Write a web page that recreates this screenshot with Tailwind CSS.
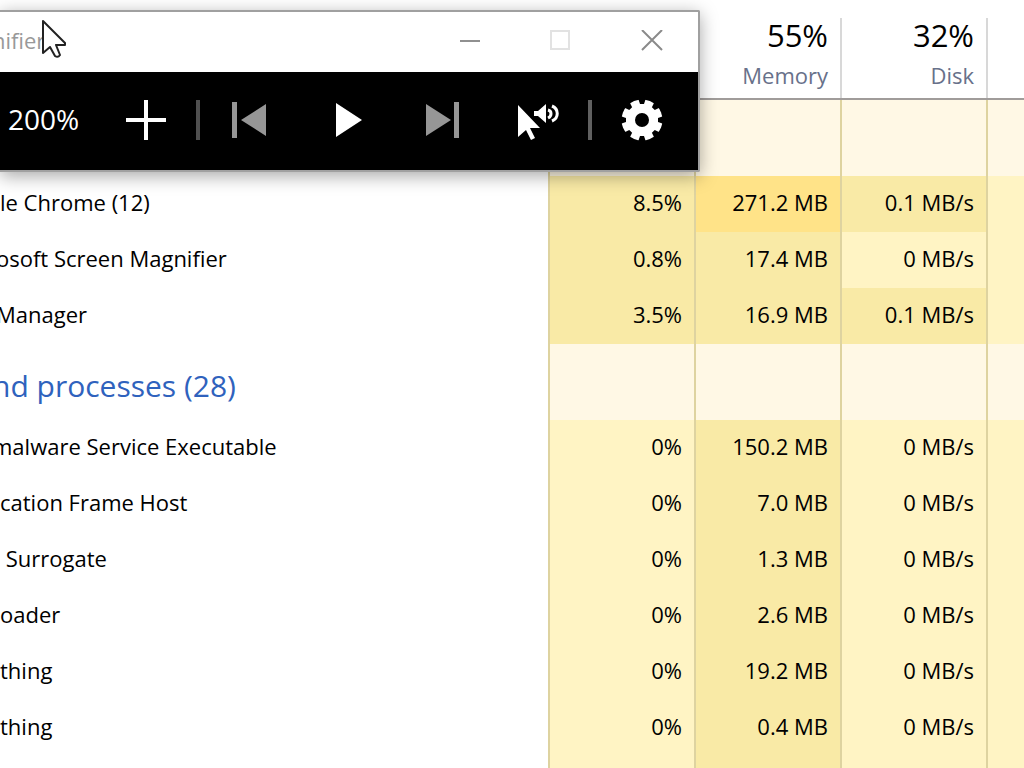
<!DOCTYPE html>
<html lang="en">
<head>
  <meta charset="UTF-8">
  <meta name="viewport" content="width=device-width, initial-scale=1.0">
  <title>Task Manager</title>
  <script src="https://cdn.jsdelivr.net/npm/@tailwindcss/browser@4"></script>
</head>
<body class="relative h-screen overflow-hidden bg-white text-black font-['Open_Sans','Noto_Sans',sans-serif]">

  <!-- Process list -->
  <table class="w-full table-fixed border-separate border-spacing-0 text-[22px] leading-7 whitespace-nowrap">
    <colgroup>
      <col>
      <col class="w-[146px]">
      <col class="w-[146px]">
      <col class="w-[146px]">
      <col class="w-[38px]">
    </colgroup>
    <thead>
      <tr class="h-[100px] text-right">
        <td class="border-b-2 border-[#a09c9a]"></td>
        <td class="border-b-2 border-[#a09c9a]"></td>
        <th scope="col" class="border-b-2 border-[#a09c9a] p-0 pt-3 pr-3 font-normal">
          <div class="text-[31px] leading-10">55%</div>
          <div class="leading-10 text-[#68718a]">Memory</div>
        </th>
        <th scope="col" class="border-b-2 border-[#a09c9a] p-0 pt-3 pr-3 font-normal bg-linear-to-b from-[#d8d8d8] to-[#d8d8d8] bg-[length:2px_80px] bg-no-repeat bg-bottom-left">
          <div class="text-[31px] leading-10">32%</div>
          <div class="leading-10 text-[#68718a]">Disk</div>
        </th>
        <td class="border-b-2 border-[#a09c9a] bg-linear-to-b from-[#d8d8d8] to-[#d8d8d8] bg-[length:2px_80px] bg-no-repeat bg-bottom-left"></td>
      </tr>
    </thead>
    <tbody id="processes"></tbody>
  </table>

  <!-- Magnifier window -->
  <section class="absolute left-0 top-[10px] w-[700px] border-2 border-l-0 border-[#a0a0a0] rounded-r-xs shadow-[0_4px_18px_rgba(0,0,0,0.35)]">
    <header class="flex h-[60px] items-center bg-white text-[#999]">
      <h1 class="-ml-2 flex-1 pb-1 text-[22px]">nifier</h1>
      <button class="flex h-full w-[92px] items-center justify-center" aria-label="Minimize">
        <svg width="24" height="24" viewBox="0 0 24 24" stroke="#909090" stroke-width="2"><path d="M4 11h20"/></svg>
      </button>
      <button class="flex h-full w-[92px] items-center justify-center" aria-label="Maximize" disabled>
        <svg width="24" height="24" viewBox="0 0 24 24" fill="none" stroke="#e2e2e2" stroke-width="2"><rect x="3" y="1" width="18" height="18"/></svg>
      </button>
      <button class="flex h-full w-[92px] items-center justify-center" aria-label="Close">
        <svg width="24" height="24" viewBox="0 0 24 24" stroke="#8a8a8a" stroke-width="2"><path d="M2 0l20 20M22 0L2 20"/></svg>
      </button>
    </header>

    <div class="flex h-[98px] items-center bg-black pb-[2px] text-white">
      <output class="w-[96px] pb-[2px] pl-2 text-[28px]">200%</output>
      <button class="flex h-full w-[100px] items-center justify-center" aria-label="Zoom in">
        <svg width="40" height="40" viewBox="0 0 40 40" stroke="#fff" stroke-width="4"><path d="M20 0v40M0 20h40"/></svg>
      </button>
      <span class="h-10 w-1 bg-[#505050]"></span>
      <button class="flex h-full flex-1 items-center justify-center" aria-label="Previous" disabled>
        <svg width="36" height="36" viewBox="0 0 36 36" fill="#969696"><path d="M1 0h5v36H1zM35 2v32L10 18z"/></svg>
      </button>
      <button class="flex h-full flex-1 items-center justify-center" aria-label="Play">
        <svg width="36" height="36" viewBox="0 0 36 36" fill="#fff"><path d="M8 1v34l26-17z"/></svg>
      </button>
      <button class="flex h-full flex-1 items-center justify-center" aria-label="Next" disabled>
        <svg width="36" height="36" viewBox="0 0 36 36" fill="#969696"><path d="M1 2v32l25-16zM29 0h5v36h-5z"/></svg>
      </button>
      <button class="flex h-full flex-1 items-center justify-center" aria-label="Read from here">
        <svg width="44" height="40" viewBox="0 0 44 40" fill="#fff">
          <path d="M0 5v32l8-7 5 10 4-2-5-10h10z"/>
          <path d="M16 11h4l8-7v19l-8-7h-4z"/>
          <path d="M30 10c4 1 4 6 0 8" fill="none" stroke="#fff" stroke-width="3"/>
          <path d="M34 6c7 3 7 12 0 15" fill="none" stroke="#fff" stroke-width="3"/>
        </svg>
      </button>
      <span class="h-10 w-1 bg-[#606060]"></span>
      <button class="mr-[6px] flex h-full w-[100px] items-center justify-center" aria-label="Settings">
        <svg width="42" height="42" viewBox="-21 -21 42 42">
          <circle r="20.5" fill="#fff"/>
          <g fill="#000">
            <path id="notch" d="M-4-22L-2-16H2L4-22z"/>
            <use href="#notch" transform="rotate(45)"/>
            <use href="#notch" transform="rotate(90)"/>
            <use href="#notch" transform="rotate(135)"/>
            <use href="#notch" transform="rotate(180)"/>
            <use href="#notch" transform="rotate(225)"/>
            <use href="#notch" transform="rotate(270)"/>
            <use href="#notch" transform="rotate(315)"/>
            <circle r="7"/>
          </g>
        </svg>
      </button>
    </div>
  </section>

  <!-- Mouse pointer -->
  <svg class="absolute left-[41px] top-[19px]" width="26" height="40" viewBox="0 0 26 40" fill="#fff" stroke="#222" stroke-width="2" stroke-linejoin="round">
    <path d="M2 2v32l7-6 5 9q3 2 5-1l-4-10h9v-2z"/>
  </svg>

  <script>
    // heat map shades, from idle to busy
    const heat = ['bg-[#fff4c4]', 'bg-[#f9eaa6]', 'bg-[#ffe388]'];

    const rows = [
      { group: '' },
      { name: 'le Chrome (12)', cells: [['8.5%', 1], ['271.2 MB', 2], ['0.1 MB/s', 1]] },
      { name: 'osoft Screen Magnifier', cut: '-ml-1', cells: [['0.8%', 1], ['17.4 MB', 1], ['0 MB/s', 0]] },
      { name: 'Manager', cut: '-ml-1', cells: [['3.5%', 1], ['16.9 MB', 1], ['0.1 MB/s', 1]] },
      { group: 'nd processes (28)' },
      { name: 'malware Service Executable', cut: '-ml-2', cells: [['0%', 0], ['150.2 MB', 1], ['0 MB/s', 0]] },
      { name: 'cation Frame Host', cells: [['0%', 0], ['7.0 MB', 1], ['0 MB/s', 0]] },
      { name: '\u00a0Surrogate', cells: [['0%', 0], ['1.3 MB', 1], ['0 MB/s', 0]] },
      { name: 'oader', cells: [['0%', 0], ['2.6 MB', 1], ['0 MB/s', 0]] },
      { name: 'thing', cells: [['0%', 0], ['19.2 MB', 1], ['0 MB/s', 0]] },
      { name: 'thing', cells: [['0%', 0], ['0.4 MB', 1], ['0 MB/s', 0]] }
    ];

    const line = 'border-l-2 border-[#ded3a0]';

    const body = rows.map(row => {
      if (row.group !== undefined) {
        const blank = `<td class="${line} bg-[#fff8e5]"></td>`;
        return `<tr class="h-[76px]">
          <th class="p-0 pt-2 text-left text-[30px] font-normal text-[#2f62bd]"><div class="-ml-2">${row.group}</div></th>
          ${blank.repeat(4)}
        </tr>`;
      }
      const cells = row.cells.map(([text, level]) =>
        `<td class="${line} ${heat[level]} p-0 pr-3 pb-1 text-right">${text}</td>`).join('');
      return `<tr class="h-[56px]">
        <td class="p-0 pb-1"><div class="${row.cut || ''}">${row.name}</div></td>
        ${cells}
        <td class="${line} ${heat[0]}"></td>
      </tr>`;
    }).join('');

    // strip of the next row at the bottom of the list
    const strip = [0, 1, 0, 0].map(level => `<td class="${line} ${heat[level]} p-0"></td>`).join('');
    document.getElementById('processes').innerHTML = body + `<tr class="h-3"><td class="p-0"></td>${strip}</tr>`;
  </script>
</body>
</html>
